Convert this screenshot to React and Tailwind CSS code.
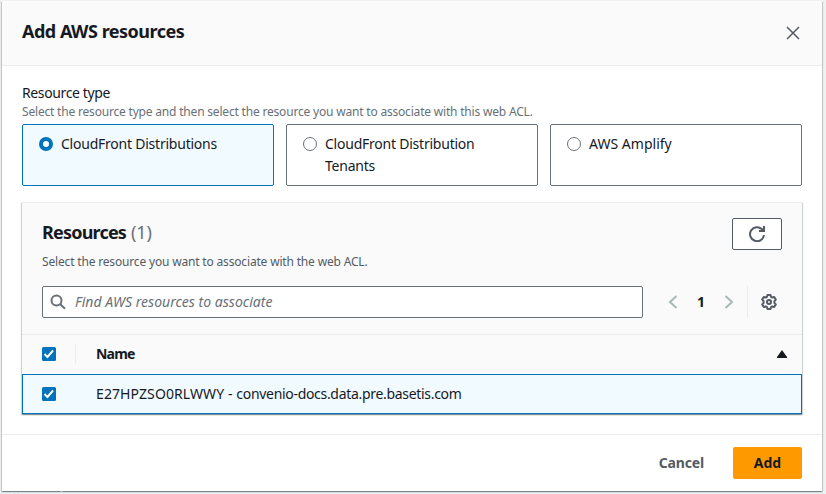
import React from "react";

function Radio({ checked }) {
  return checked ? (
    <span className="mt-[3px] h-[14px] w-[14px] shrink-0 rounded-full border-[4px] border-[#0073bb] bg-white" />
  ) : (
    <span className="mt-[3px] h-[14px] w-[14px] shrink-0 rounded-full border border-[#687078] bg-white" />
  );
}

function Tile({ checked, children }) {
  return (
    <div
      className={
        "flex h-[62px] w-[252px] gap-2 rounded-[2px] border px-4 pt-[9px] " +
        (checked ? "border-[#0073bb] bg-[#f1faff]" : "border-[#687078] bg-white")
      }
    >
      <Radio checked={checked} />
      <span className="-mt-px whitespace-pre leading-[22px]">{children}</span>
    </div>
  );
}

function Checkbox() {
  return (
    <svg width="14" height="14" viewBox="0 0 14 14" className="shrink-0">
      <rect width="14" height="14" rx="1.5" fill="#0073bb" />
      <path d="M2.5 7 L5.5 10 L11 3.5" fill="none" stroke="#fff" strokeWidth="2" />
    </svg>
  );
}

export default function App() {
  return (
    <div className="h-[494px] w-[826px] overflow-hidden bg-[#f0f2f2] pl-[2px] pt-px font-['Noto_Sans',sans-serif] text-[14px] text-[#16191f]">
      <div className="flex h-[490px] w-[820px] flex-col bg-white shadow-[0_1px_1px_0_rgba(0,28,36,0.3),1px_1px_1px_0_rgba(0,28,36,0.15),-1px_1px_1px_0_rgba(0,28,36,0.15)]">
        <header className="flex h-[65px] shrink-0 items-center justify-between border-b border-[#eaeded] bg-[#fafafa] pl-5 pr-[21px]">
          <h2 className="pb-[4px] text-[18px] font-bold leading-[22px] tracking-[-0.5px]">Add AWS resources</h2>
          <svg width="16" height="16" viewBox="0 0 16 16" fill="none" stroke="#545b64" strokeWidth="1.5">
            <path d="M2 2 L14 14 M14 2 L2 14" />
          </svg>
        </header>

        <main className="flex h-[368px] shrink-0 flex-col px-5 pt-4">
          <div className="h-[22px] leading-[22px] tracking-[-0.38px]">Resource type</div>
          <div className="h-5 whitespace-nowrap text-[12px] leading-[16px] tracking-[-0.19px] text-[#687078]">
            Select the resource type and then select the resource you want to associate with this web ACL.
          </div>
          <div className="flex gap-3 tracking-[-0.23px]">
            <Tile checked>CloudFront Distributions</Tile>
            <Tile>{"CloudFront Distribution\nTenants"}</Tile>
            <Tile><span className="tracking-[0.02px]">AWS Amplify</span></Tile>
          </div>

          <section className="mt-4 flex h-[212px] shrink-0 flex-col border-t border-[#eaeded] bg-[#fafafa] shadow-[0_1px_1px_0_rgba(0,28,36,0.3),1px_1px_1px_0_rgba(0,28,36,0.15),-1px_1px_1px_0_rgba(0,28,36,0.15)]">
            <div className="flex h-[83px] shrink-0 justify-between px-5 pt-[15px]">
              <div>
                <h3 className="-mt-px text-[18px] font-bold leading-[30px] tracking-[-0.8px]">
                  Resources <span className="ml-px font-normal tracking-[-0.1px] text-[#687078]">(1)</span>
                </h3>
                <p className="mt-[7px] whitespace-nowrap text-[12px] leading-[16px] tracking-[-0.17px] text-[#545b64]">
                  Select the resource you want to associate with the web ACL.
                </p>
              </div>
              <button className="flex h-8 w-[50px] items-center justify-center rounded-[2px] border border-[#545b64] bg-white">
                <svg width="16" height="16" viewBox="0 0 16 16" fill="none" stroke="#545b64" strokeWidth="2">
                  <path d="M15 9 A7 7 0 1 1 12.8 3 L14.5 5" />
                  <path d="M15 0 V5 H10" />
                </svg>
              </button>
            </div>

            <div className="flex h-12 shrink-0 px-5">
              <div className="flex h-8 w-[601px] items-center rounded-[2px] border border-[#687078] bg-white pl-[7px]">
                <svg width="16" height="16" viewBox="0 0 16 16" fill="none" stroke="#687078" strokeWidth="2">
                  <circle cx="6.5" cy="6.5" r="5" />
                  <path d="M10 10 L15 14.7" />
                </svg>
                <span className="-mt-px ml-[9px] italic tracking-[0.02px] text-[#687078]">Find AWS resources to associate</span>
              </div>
              <div className="ml-[22px] flex h-8 items-center">
                <svg width="16" height="16" viewBox="0 0 16 16" fill="none" stroke="#aab7b8" strokeWidth="2">
                  <path d="M11.5 2 L5 8 L11.5 14" />
                </svg>
                <span className="-mt-px w-10 text-center font-bold">1</span>
                <svg width="16" height="16" viewBox="0 0 16 16" fill="none" stroke="#aab7b8" strokeWidth="2">
                  <path d="M4.5 2 L11 8 L4.5 14" />
                </svg>
                <span className="ml-[10px] h-8 w-px bg-[#eaeded]" />
                <svg className="ml-[13px]" width="16" height="16" viewBox="0 0 16 16" fill="none" stroke="#545b64" strokeWidth="2" strokeLinejoin="round">
                  <path d="M6.5 1 H9.5 L10 2.8 L11.3 3.5 L13.2 3 L14.8 5.6 L13.4 7.1 V8.9 L14.8 10.4 L13.2 13 L11.3 12.5 L10 13.2 L9.5 15 H6.5 L6 13.2 L4.7 12.5 L2.8 13 L1.2 10.4 L2.6 8.9 V7.1 L1.2 5.6 L2.8 3 L4.7 3.5 L6 2.8 Z" />
                  <circle cx="8" cy="8" r="2" />
                </svg>
              </div>
            </div>

            <div className="flex h-10 shrink-0 items-center border-t border-[#eaeded] px-5 pb-[2px]">
              <Checkbox />
              <span className="ml-[19px] h-5 w-px bg-[#eaeded]" />
              <span className="ml-5 font-bold tracking-[-0.8px]">Name</span>
              <svg className="-mr-[6px] ml-auto" width="12" height="8" viewBox="0 0 12 8">
                <path d="M6 0 L11 7 V8 H1 V7 Z" fill="#16191f" />
              </svg>
            </div>
            <div className="flex h-10 shrink-0 items-center border border-[#0073bb] bg-[#f1faff] px-[19px]">
              <Checkbox />
              <span className="-mt-px ml-10 whitespace-pre tracking-[-0.31px]">
                <span className="tracking-[0.1px]">E27HPZSO0RLWWY - </span>convenio-docs.data.pre.basetis.com
              </span>
            </div>
          </section>
        </main>

        <footer className="flex h-[57px] shrink-0 items-center justify-end border-t border-[#eaeded] pr-5 font-bold">
          <button className="mr-[29px] pb-px tracking-[-0.15px] text-[#545b64]">Cancel</button>
          <button className="h-8 w-[69px] rounded-[2px] bg-[#ff9900] pb-px">Add</button>
        </footer>
      </div>
      <div className="mt-px pl-[11px] text-[12px] leading-[10px] text-[#dde2e2]">You can increase</div>
    </div>
  );
}
